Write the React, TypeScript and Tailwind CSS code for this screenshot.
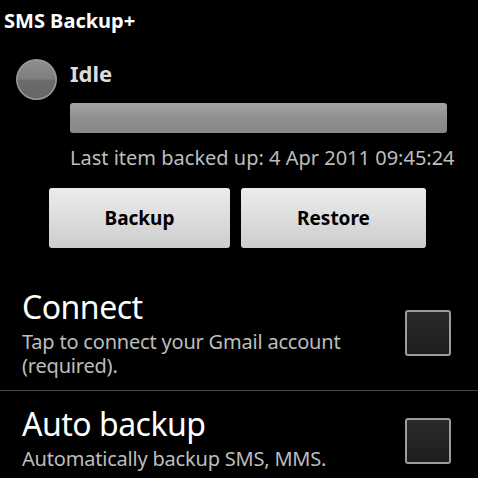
import React from 'react';

const font = { fontFamily: '"Noto Sans", "DejaVu Sans", sans-serif' };

function StatusLight() {
  return (
    <svg width="43" height="43" viewBox="0 0 43 43">
      <defs>
        <linearGradient id="ball" x1="0" y1="0" x2="0" y2="1">
          <stop offset="0" stopColor="#8f8f8f" />
          <stop offset="0.48" stopColor="#7e7e7e" />
          <stop offset="0.52" stopColor="#6c6c6c" />
          <stop offset="1" stopColor="#666" />
        </linearGradient>
      </defs>
      <circle cx="21.5" cy="21.5" r="20.5" fill="#9a9a9a" />
      <circle cx="21.5" cy="21.5" r="19" fill="url(#ball)" />
    </svg>
  );
}

function Checkbox() {
  return (
    <div className="w-[46px] h-[46px] rounded-[3px] border-2 border-[#9c9c9c] bg-linear-to-b from-[#2a2a2a] to-[#1e1e1e]" />
  );
}

function Pref({ title, summary, boxTop }: { title: string; summary: string[]; boxTop: string }) {
  return (
    <div className="flex pl-[22px] pr-[27px]">
      <div className="flex-1 flex flex-col">
        <div className="text-[32px] leading-[40px] tracking-[-0.5px] text-white">{title}</div>
        <div className="mt-[3px] text-[20px] leading-[24px] tracking-[-0.2px] text-[#bdbdbd]">
          {summary.map((s) => (
            <div key={s}>{s}</div>
          ))}
        </div>
      </div>
      <div className={'shrink-0 ' + boxTop}>
        <Checkbox />
      </div>
    </div>
  );
}

export default function App() {
  return (
    <div className="w-[478px] h-[478px] overflow-hidden bg-black" style={font}>
      <div className="h-[42px] px-[4px] flex items-center text-[20px] font-bold text-white">SMS Backup+</div>

      <div className="flex">
        <div className="w-[70px] shrink-0 pl-[15px] pt-[16px]">
          <StatusLight />
        </div>
        <div className="flex-1 min-w-0 flex flex-col pt-[13px] pr-[31px]">
          <div className="h-[36px] leading-[36px] text-[22px] font-bold text-[#dcdcdc]">Idle</div>
          <div className="mt-[12px] h-[30px] rounded-[3px] bg-linear-to-b from-[#a5a5a5] via-[#8f8f8f] to-[#878787]" />
          <div className="mt-[10px] h-[30px] leading-[30px] text-[20px] text-[#bdbdbd] whitespace-nowrap">
            Last item backed up: 4 Apr 2011 09:45:24
          </div>
        </div>
      </div>

      <div className="mt-[15px] pl-[49px] flex gap-[11px]">
        <button className="w-[181px] h-[60px] rounded-[3px] bg-linear-to-b from-[#ececec] to-[#cdcdcd] text-[19px] font-bold text-black">
          Backup
        </button>
        <button className="w-[185px] h-[60px] rounded-[3px] bg-linear-to-b from-[#ececec] to-[#cdcdcd] text-[19px] font-bold text-black">
          Restore
        </button>
      </div>

      <div className="mt-[27px] flex flex-col">
        <div className="pt-[12px] pb-[12px]">
          <Pref title="Connect" summary={['Tap to connect your Gmail account', '(required).']} boxTop="mt-[23px]" />
        </div>
        <div className="h-px bg-[#4a4a4a]" />
        <div className="pt-[13px]">
          <Pref title="Auto backup" summary={['Automatically backup SMS, MMS.']} boxTop="mt-[14px]" />
        </div>
      </div>
    </div>
  );
}
